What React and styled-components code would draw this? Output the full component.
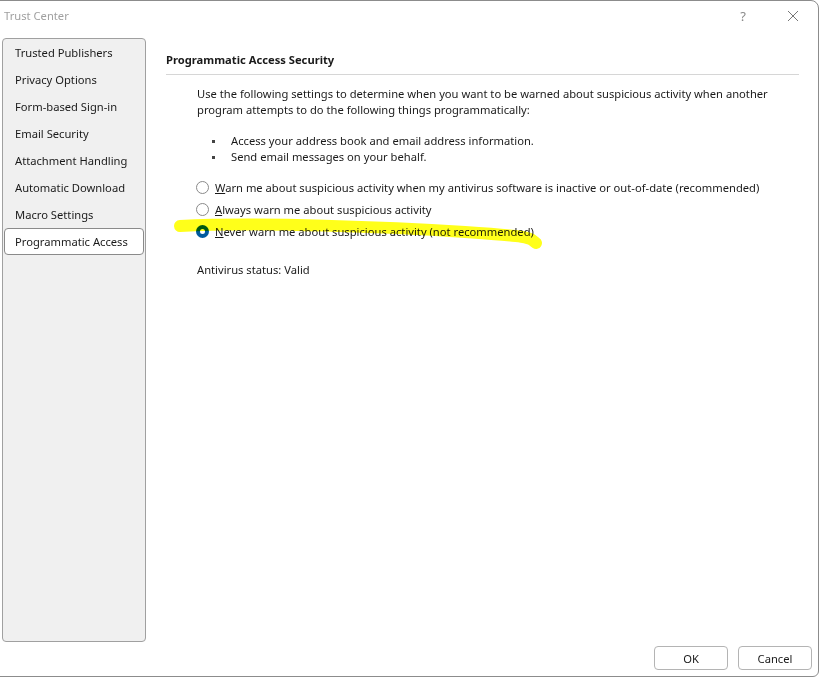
import React, { useState } from "react";
import styled, { createGlobalStyle } from "styled-components";

const GlobalStyle = createGlobalStyle`
  html, body {
    margin: 0;
    padding: 0;
    background: #ffffff;
    overflow: hidden;
  }
  body {
    font-family: "Noto Sans", "Open Sans", sans-serif;
    font-size: 11.2px;
    color: #1a1a1a;
  }
`;

const Window = styled.div`
  position: relative;
  box-sizing: border-box;
  width: 820px;
  height: 677px;
  margin-left: -1px;
  border: 1px solid #8c8c8c;
  border-top-right-radius: 8px;
  border-bottom-right-radius: 6px;
  background: #fff;
  display: flex;
  flex-direction: column;
`;

const TitleBar = styled.div`
  height: 29px;
  display: flex;
  align-items: center;
  padding-left: 4px;
  color: #a0a0a0;
`;

const Title = styled.div`
  flex: 1;
`;

const TitleButton = styled.div`
  width: 50px;
  display: flex;
  justify-content: center;
  color: #8a8a8a;
  font-size: 13px;
`;

const Main = styled.div`
  margin-top: 8px;
  height: 604px;
  display: flex;
`;

const Nav = styled.div`
  box-sizing: border-box;
  width: 144px;
  margin-left: 2px;
  border: 1px solid #a0a0a0;
  border-radius: 4px;
  background: #f0f0f0;
`;

const NavItem = styled.div`
  box-sizing: border-box;
  height: 27px;
  display: flex;
  align-items: center;
  padding-left: ${(p) => (p.$selected ? 10 : 11)}px;
  margin: 0 ${(p) => (p.$selected ? 1 : 0)}px;
  border: 1px solid ${(p) => (p.$selected ? "#8a8a8a" : "transparent")};
  border-radius: 4px;
  background: ${(p) => (p.$selected ? "#fff" : "transparent")};
  cursor: default;
`;

const Content = styled.div`
  flex: 1;
  padding: 14px 19px 0 20px;
`;

const Heading = styled.div`
  font-weight: 700;
  line-height: 16px;
  padding-bottom: 6px;
  border-bottom: 1px solid #d6d6d6;
`;

const Section = styled.div`
  margin-left: 31px;
  white-space: nowrap;
`;

const Paragraph = styled.p`
  margin: 11px 0 0;
  line-height: 16px;
`;

const Bullets = styled.ul`
  margin: 15px 0 0;
  padding: 0;
  list-style: none;
  line-height: 16px;
`;

const Bullet = styled.li`
  display: flex;
  &::before {
    content: "";
    width: 3px;
    height: 3px;
    margin: 7px 16px 0 15px;
    background: #444;
  }
`;

const Options = styled.div`
  margin-top: 11px;
`;

const Option = styled.label`
  height: 22px;
  display: flex;
  align-items: center;
  gap: 6px;
  margin-left: -1px;
`;

const Radio = styled.span`
  box-sizing: border-box;
  width: 13px;
  height: 13px;
  border-radius: 50%;
  border: ${(p) => (p.$checked ? "4px solid #005a9e" : "1px solid #8a8a8a")};
  background: #fff;
`;

const Status = styled.div`
  margin-top: 20px;
  line-height: 16px;
`;

const Footer = styled.div`
  display: flex;
  justify-content: flex-end;
  gap: 10px;
  padding: 4px 6px 0 0;
`;

const Button = styled.button`
  box-sizing: border-box;
  width: 74px;
  height: 24px;
  font-family: inherit;
  font-size: 11.2px;
  color: #1a1a1a;
  background: #fff;
  border: 1px solid #b4b4b4;
  border-radius: 4px;
`;

const Highlight = styled.svg`
  position: absolute;
  left: 0;
  top: -1px;
  pointer-events: none;
  mix-blend-mode: multiply;
`;

const items = [
  "Trusted Publishers",
  "Privacy Options",
  "Form-based Sign-in",
  "Email Security",
  "Attachment Handling",
  "Automatic Download",
  "Macro Settings",
  "Programmatic Access",
];

const options = [
  ["W", "arn me about suspicious activity when my antivirus software is inactive or out-of-date (recommended)"],
  ["A", "lways warn me about suspicious activity"],
  ["N", "ever warn me about suspicious activity (not recommended)"],
];

export default function App() {
  const [selected, setSelected] = useState(2);

  return (
    <>
      <GlobalStyle />
      <Window>
        <TitleBar>
          <Title>Trust Center</Title>
          <TitleButton>?</TitleButton>
          <TitleButton>
            <svg width="12" height="12" viewBox="0 0 12 12">
              <path d="M1 1 L11 11 M11 1 L1 11" stroke="#777" strokeWidth="1" fill="none" />
            </svg>
          </TitleButton>
        </TitleBar>
        <Main>
          <Nav>
            {items.map((item, i) => (
              <NavItem key={item} $selected={i === items.length - 1}>
                {item}
              </NavItem>
            ))}
          </Nav>
          <Content>
            <Heading>Programmatic Access Security</Heading>
            <Section>
              <Paragraph>
                Use the following settings to determine when you want to be warned about suspicious activity when another
                <br />
                program attempts to do the following things programmatically:
              </Paragraph>
              <Bullets>
                <Bullet>Access your address book and email address information.</Bullet>
                <Bullet>Send email messages on your behalf.</Bullet>
              </Bullets>
              <Options>
                {options.map(([key, rest], i) => (
                  <Option key={key} onClick={() => setSelected(i)}>
                    <Radio $checked={selected === i} />
                    <span>
                      <u>{key}</u>
                      {rest}
                    </span>
                  </Option>
                ))}
              </Options>
              <Status>Antivirus status: Valid</Status>
            </Section>
          </Content>
        </Main>
        <Footer>
          <Button>OK</Button>
          <Button>Cancel</Button>
        </Footer>
        <Highlight width="821" height="678">
          <path
            d="M 180 226 C 260 222, 390 227, 465 232 S 528 238, 536 243"
            fill="none"
            stroke="#ffff1a"
            strokeWidth="12"
            strokeLinecap="round"
          />
        </Highlight>
      </Window>
    </>
  );
}
